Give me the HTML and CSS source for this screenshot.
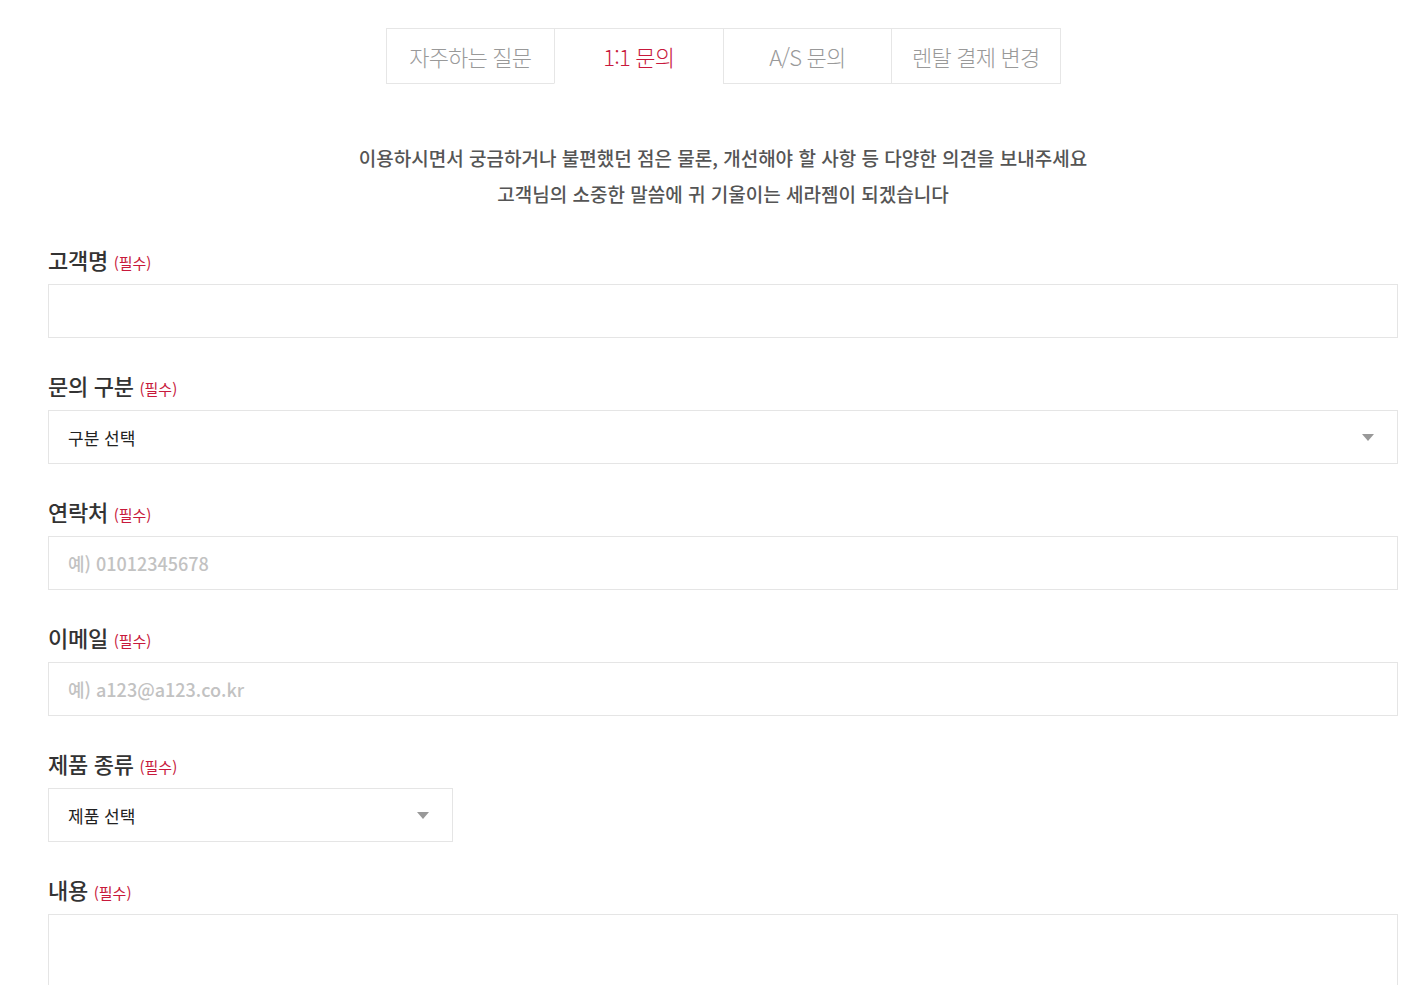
FILE: index.html
```html
<!DOCTYPE html>
<html lang="ko">
<head>
    <meta charset="UTF-8">
    <meta name="viewport" content="width=device-width, initial-scale=1.0">
    <title>1:1 문의</title>
    <link rel="stylesheet" href="styles.css">
</head>
<body>

<div class="inquiry">
    <ul class="tabs">
        <li><a href="#">자주하는 질문</a></li>
        <li class="active"><a href="#">1:1 문의</a></li>
        <li><a href="#">A/S 문의</a></li>
        <li><a href="#">렌탈 결제 변경</a></li>
    </ul>

    <p class="intro">
        이용하시면서 궁금하거나 불편했던 점은 물론, 개선해야 할 사항 등 다양한 의견을 보내주세요<br>
        고객님의 소중한 말씀에 귀 기울이는 세라젬이 되겠습니다
    </p>

    <form class="inquiry-form">
        <div class="field">
            <label for="name">고객명 <span class="req">(필수)</span></label>
            <input type="text" id="name">
        </div>
        <div class="field">
            <label for="category">문의 구분 <span class="req">(필수)</span></label>
            <div class="select-box">
                <select id="category">
                    <option>구분 선택</option>
                </select>
            </div>
        </div>
        <div class="field">
            <label for="phone">연락처 <span class="req">(필수)</span></label>
            <input type="text" id="phone" placeholder="예) 01012345678">
        </div>
        <div class="field">
            <label for="email">이메일 <span class="req">(필수)</span></label>
            <input type="text" id="email" placeholder="예) a123@a123.co.kr">
        </div>
        <div class="field">
            <label for="product">제품 종류 <span class="req">(필수)</span></label>
            <div class="select-box small">
                <select id="product">
                    <option>제품 선택</option>
                </select>
            </div>
        </div>
        <div class="field">
            <label for="content">내용 <span class="req">(필수)</span></label>
            <textarea id="content"></textarea>
        </div>
    </form>
</div>

</body>
</html>
```

FILE: styles.css
```css
body {
    margin: 0;
    background: #fff;
    font-family: "Noto Sans CJK KR", "Noto Sans", sans-serif;
    color: #333;
}
.inquiry {
    width: 1350px;
    margin-left: 48px;
    padding-top: 28px;
}
.tabs {
    display: flex;
    justify-content: center;
    margin: 0;
    padding: 0 0 0 1px;
    list-style: none;
}
.tabs li {
    box-sizing: border-box;
    width: 169.5px;
    height: 56px;
    border: 1px solid #e6e6e6;
    margin-left: -1px;
}
.tabs li.active {
    border-bottom-color: #fff;
}
.tabs a {
    display: flex;
    align-items: center;
    justify-content: center;
    height: 100%;
    font-size: 22px;
    font-weight: 300;
    letter-spacing: -0.8px;
    color: #999;
    text-decoration: none;
}
.tabs li.active a {
    color: #c8193c;
}
.intro {
    margin: 56px 0 0;
    text-align: center;
    font-size: 19px;
    font-weight: 500;
    line-height: 36px;
    color: #555;
}
.inquiry-form {
    margin-top: 36px;
}
.field {
    margin-bottom: 36px;
}
.field label {
    display: block;
    height: 24px;
    line-height: 22px;
    margin-bottom: 12px;
    font-size: 22px;
    font-weight: 500;
    letter-spacing: -0.3px;
    color: #333;
}
.field .req {
    font-size: 15px;
    font-weight: 400;
    letter-spacing: 0;
    color: #c8193c;
}
.field input,
.field select,
.field textarea {
    display: block;
    box-sizing: border-box;
    width: 100%;
    height: 54px;
    padding: 0 19px;
    border: 1px solid #e5e5e5;
    border-radius: 0;
    background: #fff;
    font-family: inherit;
    font-size: 18px;
    color: #222;
    outline: none;
}
.field input::placeholder {
    color: #c2c2c2;
    font-weight: 500;
}
.select-box {
    position: relative;
}
.select-box.small {
    width: 405px;
}
.select-box select {
    -webkit-appearance: none;
    appearance: none;
    font-size: 17px;
}
.select-box::after {
    content: "";
    position: absolute;
    right: 24px;
    top: 24px;
    border-left: 6px solid transparent;
    border-right: 6px solid transparent;
    border-top: 7px solid #999;
    pointer-events: none;
}
.field textarea {
    height: 200px;
    padding: 16px 19px;
    resize: none;
}
```
